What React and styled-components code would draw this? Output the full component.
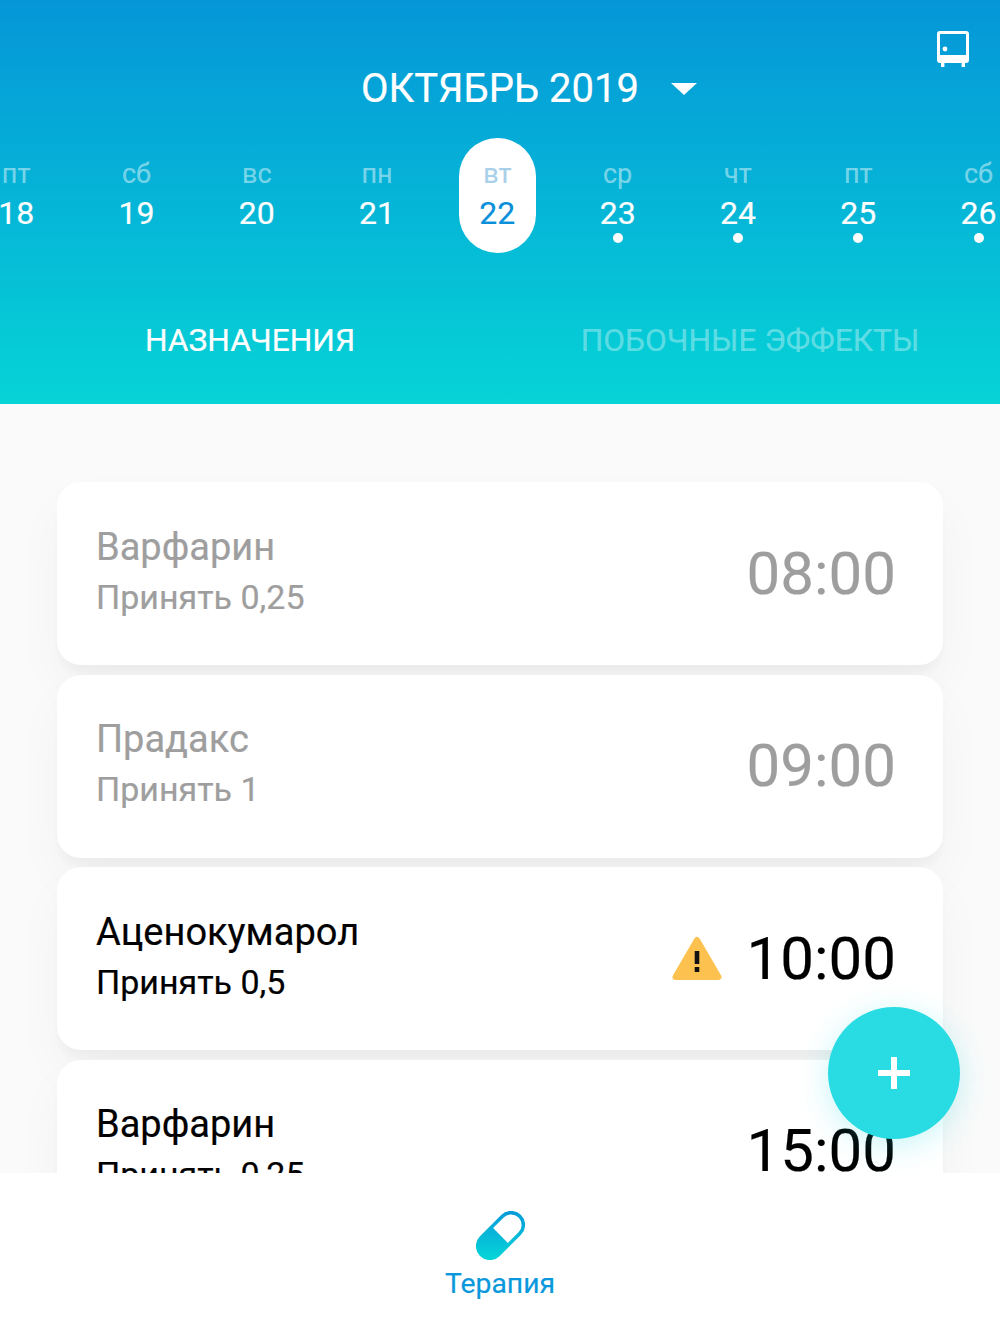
import React from 'react';
import styled, {createGlobalStyle} from 'styled-components';

const GlobalStyle = createGlobalStyle`
  html, body {
    margin: 0;
    padding: 0;
    background: #fafafa;
    font-family: Roboto, "Noto Sans", sans-serif;
  }
`;

const days = [
  {name: 'пт', num: 18},
  {name: 'сб', num: 19},
  {name: 'вс', num: 20},
  {name: 'пн', num: 21},
  {name: 'вт', num: 22, active: true},
  {name: 'ср', num: 23, dot: true},
  {name: 'чт', num: 24, dot: true},
  {name: 'пт', num: 25, dot: true},
  {name: 'сб', num: 26, dot: true},
];

const items = [
  {id: 1, title: 'Варфарин', dose: 'Принять 0,25', time: '08:00', done: true},
  {id: 2, title: 'Прадакс', dose: 'Принять 1', time: '09:00', done: true},
  {id: 3, title: 'Аценокумарол', dose: 'Принять 0,5', time: '10:00', warn: true},
  {id: 4, title: 'Варфарин', dose: 'Принять 0,25', time: '15:00'},
];

const BusIcon = () => (
  <svg width="34" height="38" viewBox="0 0 34 38">
    <path fillRule="evenodd" fill="#fff"
      d="M4 1h26a3 3 0 0 1 3 3v26a3 3 0 0 1-3 3H4a3 3 0 0 1-3-3V4a3 3 0 0 1 3-3zM4 4v21h26V4z"/>
    <circle cx="9" cy="19" r="2.400" fill="#fff"/>
    <rect x="5" y="32" width="3.400" height="5" fill="#fff"/>
    <rect x="25.600" y="32" width="3.400" height="5" fill="#fff"/>
  </svg>
);

const WarnIcon = () => (
  <svg width="50" height="46" viewBox="0 0 50 46">
    <path d="M25 4 L46.500 41 H3.500 Z" fill="#fdc14f" stroke="#fdc14f" strokeWidth="6" strokeLinejoin="round"/>
    <rect x="22.700" y="15" width="4.600" height="13" fill="#111"/>
    <rect x="22.700" y="31" width="4.600" height="5" fill="#111"/>
  </svg>
);

const PillIcon = () => (
  <svg width="49" height="49" viewBox="-24.500 -24.500 49 49">
    <defs>
      <linearGradient id="pillFill" gradientUnits="userSpaceOnUse" x1="17" y1="-17" x2="-17" y2="17">
        <stop offset="0" stopColor="#059ad9"/>
        <stop offset="1" stopColor="#06d6d8"/>
      </linearGradient>
    </defs>
    <path transform="rotate(-45)" fillRule="evenodd" fill="url(#pillFill)"
      d="M-15 -14H15A14 14 0 0 1 15 14H-15A14 14 0 0 1 -15 -14ZM0 -10.500V10.500H15A10.500 10.500 0 0 0 15 -10.500Z"/>
  </svg>
);

const App = () => (
  <Page>
    <GlobalStyle/>
    <Header>
      <TopRow>
        <Month>ОКТЯБРЬ 2019</Month>
        <Caret/>
        <BusButton><BusIcon/></BusButton>
      </TopRow>
      <DayStrip>
        {days.map(d =>
          <Day key={d.num} active={d.active}>
            <DayName active={d.active}>{d.name}</DayName>
            <DayNum active={d.active}>{d.num}</DayNum>
            {d.dot && <Dot/>}
          </Day>
        )}
      </DayStrip>
      <Tabs>
        <Tab active>НАЗНАЧЕНИЯ</Tab>
        <Tab>ПОБОЧНЫЕ ЭФФЕКТЫ</Tab>
      </Tabs>
    </Header>
    <Content>
      {items.map(i =>
        <Card key={i.id}>
          <CardText>
            <CardTitle done={i.done}>{i.title}</CardTitle>
            <CardDose done={i.done}>{i.dose}</CardDose>
          </CardText>
          <CardRight>
            {i.warn && <WarnIcon/>}
            <CardTime done={i.done}>{i.time}</CardTime>
          </CardRight>
        </Card>
      )}
    </Content>
    <Fab>
      <svg width="34" height="34" viewBox="0 0 34 34">
        <path d="M14 1h6v13h13v6H20v13h-6V20H1v-6h13z" fill="#fff"/>
      </svg>
    </Fab>
    <BottomBar>
      <PillIcon/>
      <BottomLabel>Терапия</BottomLabel>
    </BottomBar>
  </Page>
);

const Page = styled.div`
  position: relative;
  width: 1000px;
  height: 1334px;
  display: flex;
  flex-direction: column;
  overflow: hidden;
  background: #fafafa;
  -webkit-text-stroke: 0.2px;
`;

const Header = styled.header`
  height: 404px;
  flex-shrink: 0;
  display: flex;
  flex-direction: column;
  background: linear-gradient(180deg, #0596d8 0%, #06d4d6 100%);
`;

const TopRow = styled.div`
  position: relative;
  height: 138px;
  box-sizing: border-box;
  padding: 66px 0 0 361px;
  display: flex;
  align-items: flex-start;
`;

const Month = styled.div`
  font-size: 40px;
  line-height: 46px;
  color: #fff;
  white-space: nowrap;
`;

const Caret = styled.div`
  margin: 17px 0 0 32px;
  width: 0;
  height: 0;
  border-left: 13px solid transparent;
  border-right: 13px solid transparent;
  border-top: 12px solid #fff;
`;

const BusButton = styled.div`
  position: absolute;
  top: 30px;
  right: 30px;
  line-height: 0;
`;

const DayStrip = styled.div`
  display: flex;
  height: 115px;
  margin-left: -44px;
`;

const Day = styled.div`
  position: relative;
  flex: 0 0 120.300px;
  height: 115px;
  display: flex;
  flex-direction: column;
  align-items: center;
  padding-top: 20px;
  box-sizing: border-box;
  &::before {
    content: '';
    display: ${({active}) => active ? 'block' : 'none'};
    position: absolute;
    top: 0;
    left: 21.500px;
    width: 77px;
    height: 115px;
    border-radius: 38.500px;
    background: #fff;
  }
`;

const DayName = styled.div`
  position: relative;
  font-size: 27px;
  line-height: 32px;
  color: ${({active}) => active ? '#a9d0ea' : 'rgba(255,255,255,0.45)'};
`;

const DayNum = styled.div`
  position: relative;
  margin-top: 4px;
  font-size: 32px;
  line-height: 38px;
  color: ${({active}) => active ? '#0a90da' : '#fff'};
`;

const Dot = styled.div`
  width: 10px;
  height: 10px;
  margin-top: 1px;
  border-radius: 50%;
  background: #fff;
`;

const Tabs = styled.div`
  display: flex;
  margin-top: 69px;
`;

const Tab = styled.div`
  flex: 1;
  text-align: center;
  font-size: 31.700px;
  line-height: 38px;
  color: ${({active}) => active ? '#fff' : 'rgba(255,255,255,0.35)'};
`;

const Content = styled.main`
  flex: 1;
  min-height: 0;
  overflow: hidden;
  padding: 78px 57px 0;
  display: flex;
  flex-direction: column;
  gap: 9.500px;
`;

const Card = styled.div`
  flex: 0 0 183px;
  box-sizing: border-box;
  padding: 0 47px 0 40px;
  display: flex;
  justify-content: space-between;
  align-items: center;
  border-radius: 24px;
  background: #fff;
  box-shadow: 0 24px 50px rgba(0, 0, 0, 0.035), 0 10px 8px -2px rgba(0, 0, 0, 0.03);
`;

const CardText = styled.div`
  display: flex;
  flex-direction: column;
  margin-top: -6px;
  margin-left: -1px;
`;

const CardTitle = styled.div`
  font-size: 38px;
  line-height: 44px;
  color: ${({done}) => done ? '#9e9e9e' : '#000'};
`;

const CardDose = styled.div`
  margin-top: 8px;
  font-size: 34px;
  line-height: 40px;
  color: ${({done}) => done ? '#9e9e9e' : '#000'};
`;

const CardRight = styled.div`
  display: flex;
  align-items: center;
  gap: 25px;
`;

const CardTime = styled.div`
  font-size: 60px;
  line-height: 70px;
  color: ${({done}) => done ? '#9e9e9e' : '#000'};
`;

const Fab = styled.button`
  position: absolute;
  left: 828px;
  top: 1007px;
  width: 132px;
  height: 132px;
  border: none;
  padding: 0;
  border-radius: 50%;
  background: #29dce3;
  box-shadow: 0 6px 30px rgba(41, 220, 227, 0.25);
  display: flex;
  align-items: center;
  justify-content: center;
`;

const BottomBar = styled.nav`
  height: 161px;
  flex-shrink: 0;
  position: relative;
  background: #fff;
  display: flex;
  flex-direction: column;
  align-items: center;
  padding-top: 38px;
  box-sizing: border-box;
`;

const BottomLabel = styled.div`
  margin-top: 8px;
  font-size: 28.300px;
  line-height: 32px;
  color: #0a98dc;
`;

export default App;
